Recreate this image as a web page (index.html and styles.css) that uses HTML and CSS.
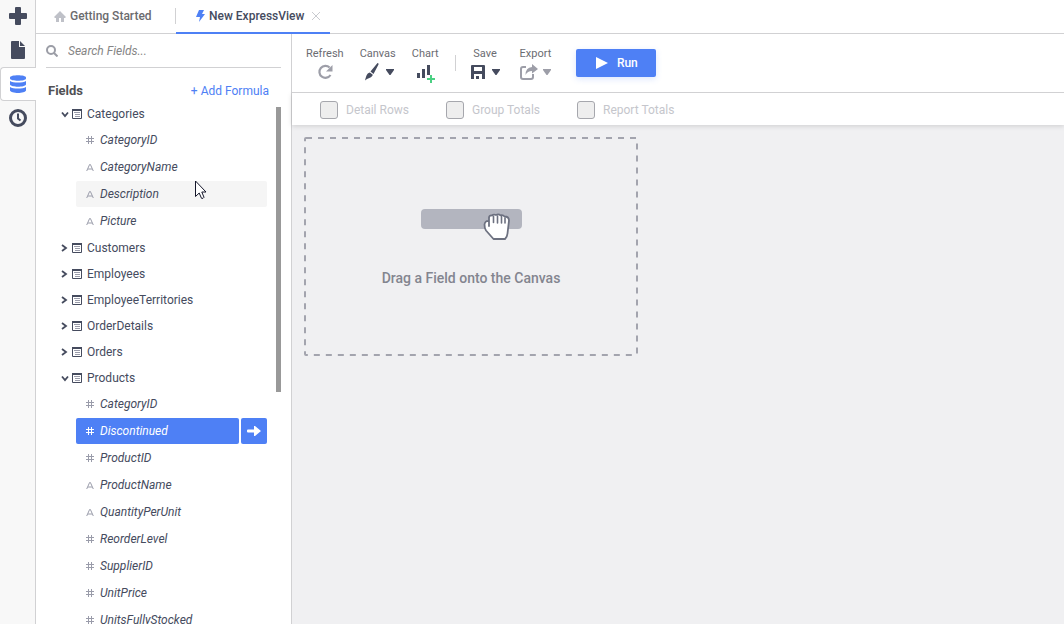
FILE: index.html
```html
<!DOCTYPE html>
<html lang="en">
<head>
<meta charset="utf-8">
<title>New ExpressView</title>
<link rel="stylesheet" href="styles.css">
</head>
<body>
<svg class="sprite" aria-hidden="true">
  <symbol id="down" viewBox="0 0 8 8"><path d="M1 2.500l3 3.500 3-3.500" fill="none" stroke="currentColor" stroke-width="1.800"/></symbol>
  <symbol id="right" viewBox="0 0 8 8"><path d="M1 1l4 3-4 3" fill="none" stroke="currentColor" stroke-width="1.800"/></symbol>
  <symbol id="table" viewBox="0 0 10 10"><path d="M.5 1v8.500h9V1" fill="none" stroke="currentColor"/><path d="M0 0h10v2H0z" fill="currentColor"/><path d="M2 3.500h6M3 5.500h5M3 7.500h5" stroke="#9a9caa"/></symbol>
  <symbol id="hash" viewBox="0 0 8 8"><path d="M2.500 0v8M5.500 0v8M0 2.500h8M0 5.500h8" stroke="currentColor"/></symbol>
  <symbol id="alpha" viewBox="0 0 8 8"><path d="M.7 8L3.600 1.500h.8L7.300 8M2 6h4" fill="none" stroke="currentColor"/></symbol>
  <symbol id="caret" viewBox="0 0 8 6"><path d="M0 0h8v1L4.500 6h-1L0 1z" fill="currentColor"/></symbol>
</svg>
<div class="app">
  <nav class="rail" aria-label="Main">
    <button class="rail-item" aria-label="New"><svg width="18" height="18" viewBox="0 0 18 18"><path d="M7 0h4q1 0 1 1v5h5q1 0 1 1v4q0 1-1 1h-5v5q0 1-1 1H7q-1 0-1-1v-5H1q-1 0-1-1V7q0-1 1-1h5V1q0-1 1-1z" fill="currentColor"/></svg></button>
    <button class="rail-item" aria-label="Reports"><svg width="14" height="18" viewBox="0 0 14 18"><path d="M1 0h7v6h6v11q0 1-1 1H1q-1 0-1-1V1q0-1 1-1zM9 0l5 5H9z" fill="currentColor"/></svg></button>
    <button class="rail-item current" aria-label="Data"><svg width="16" height="18" viewBox="0 0 16 18"><path d="M0 2.500C0-.5 16-.5 16 2.500v1c0 3-16 3-16 0zM0 6c3 2 13 2 16 0v3.500c-1 3-15 3-16 0zM0 12c3 2 13 2 16 0v3.500c-1 3.300-15 3.300-16 0z" fill="currentColor"/></svg></button>
    <button class="rail-item" aria-label="Schedule"><svg width="18" height="18" viewBox="0 0 18 18"><circle cx="9" cy="9" r="7.500" fill="none" stroke="currentColor" stroke-width="3"/><path d="M9 4.500v5l2.500 2" fill="none" stroke="currentColor" stroke-width="2"/></svg></button>
  </nav>
  <div class="work">
    <header class="tabs">
      <button class="tab home"><svg width="12" height="11" viewBox="0 0 12 11"><path d="M6 0l6 6-1 1h-1v4H7V7H5v4H2V7H1L0 6z" fill="#bfc1c8"/></svg>Getting Started</button>
      <div class="tab active"><svg width="9" height="12" viewBox="0 0 9 12"><path d="M3 0h5L6 4h3L3 12l1-5H0z" fill="#4e80f5"/></svg><span>New ExpressView</span><button class="close" aria-label="Close tab"><svg width="8" height="8" viewBox="0 0 8 8"><path d="M0 0l8 8M8 0L0 8" stroke="#c9cbd0"/></svg></button></div>
    </header>
    <div class="body">
      <aside class="panel">
        <label class="search"><svg width="12" height="12" viewBox="0 0 12 12"><circle cx="5" cy="5" r="4" fill="none" stroke="#9b9da6" stroke-width="2"/><path d="M8 8l3.500 3.500" stroke="#9b9da6" stroke-width="2"/></svg><input type="search" placeholder="Search Fields..." aria-label="Search fields"></label>
        <div class="panel-head"><h2>Fields</h2><a href="#">+ Add Formula</a></div>
        <div class="tree-area">
          <ul class="tree">
            <li><button class="group"><svg class="arrow"><use href="#down"/></svg><svg class="tbl"><use href="#table"/></svg>Categories</button>
              <ul class="fields">
                <li><button class="field"><svg><use href="#hash"/></svg>CategoryID</button></li>
                <li><button class="field"><svg><use href="#alpha"/></svg>CategoryName</button></li>
                <li><button class="field hovered"><svg><use href="#alpha"/></svg>Description</button></li>
                <li><button class="field"><svg><use href="#alpha"/></svg>Picture</button></li>
              </ul></li>
            <li><button class="group"><svg class="arrow"><use href="#right"/></svg><svg class="tbl"><use href="#table"/></svg>Customers</button></li>
            <li><button class="group"><svg class="arrow"><use href="#right"/></svg><svg class="tbl"><use href="#table"/></svg>Employees</button></li>
            <li><button class="group"><svg class="arrow"><use href="#right"/></svg><svg class="tbl"><use href="#table"/></svg>EmployeeTerritories</button></li>
            <li><button class="group"><svg class="arrow"><use href="#right"/></svg><svg class="tbl"><use href="#table"/></svg>OrderDetails</button></li>
            <li><button class="group"><svg class="arrow"><use href="#right"/></svg><svg class="tbl"><use href="#table"/></svg>Orders</button></li>
            <li><button class="group"><svg class="arrow"><use href="#down"/></svg><svg class="tbl"><use href="#table"/></svg>Products</button>
              <ul class="fields">
                <li><button class="field"><svg><use href="#hash"/></svg>CategoryID</button></li>
                <li><button class="field selected"><svg><use href="#hash"/></svg>Discontinued</button><button class="add" aria-label="Add Discontinued"><svg width="14" height="10" viewBox="0 0 14 10"><path d="M1 3.500h6V0h1l6 5-6 5H7V6.500H1q-1 0-1-1v-1q0-1 1-1z" fill="#fff"/></svg></button></li>
                <li><button class="field"><svg><use href="#hash"/></svg>ProductID</button></li>
                <li><button class="field"><svg><use href="#alpha"/></svg>ProductName</button></li>
                <li><button class="field"><svg><use href="#alpha"/></svg>QuantityPerUnit</button></li>
                <li><button class="field"><svg><use href="#hash"/></svg>ReorderLevel</button></li>
                <li><button class="field"><svg><use href="#hash"/></svg>SupplierID</button></li>
                <li><button class="field"><svg><use href="#hash"/></svg>UnitPrice</button></li>
                <li><button class="field"><svg><use href="#hash"/></svg>UnitsFullyStocked</button></li>
              </ul></li>
          </ul>
          <div class="scroll-track"><div class="scroll-thumb"></div></div>
          <svg class="pointer" width="13" height="20" viewBox="0 0 13 20"><path d="M1.500 1v15.500l3.700-3.500 2.300 5.300q1.800.5 2.500-1L7.800 12H12z" fill="#fff" stroke="#14162a"/></svg>
        </div>
      </aside>
      <main class="main">
        <div class="toolbar">
          <button class="tool muted"><span>Refresh</span><span class="icons"><svg width="16" height="16" viewBox="0 0 16 16"><path d="M12.600 3.500A6 6 0 1 0 13.500 11" fill="none" stroke="currentColor" stroke-width="2.200"/><path d="M15.500 1v6.500H9z" fill="currentColor"/></svg></span></button>
          <button class="tool brush"><span>Canvas</span><span class="icons"><svg width="14" height="18" viewBox="0 0 14 18"><path d="M12.500 0q1.500 0 1 1.500L8.500 11 5.500 8.500zM4.800 9.400l3 2.400C7 15 3.500 14.500 0 17.500c1-3.500 1.500-7.500 4.800-8.100z" fill="currentColor"/></svg><svg class="caret"><use href="#caret"/></svg></span></button>
          <button class="tool"><span>Chart</span><span class="icons"><svg width="20" height="22" viewBox="0 0 20 22"><path d="M2 12h3v5H2zM7 8h3v9H7zM12 4h3v10h-3z" fill="currentColor"/><path d="M16 14v8M12 18h8" stroke="#4bd083" stroke-width="2"/></svg></span></button>
          <span class="divider"></span>
          <button class="tool save"><span>Save</span><span class="icons"><svg width="14" height="14" viewBox="0 0 14 14"><path fill-rule="evenodd" d="M1 0h12q1 0 1 1v13H0V1q0-1 1-1zM3 2v4h8V2zM3 9v5h8V9z" fill="currentColor"/><path d="M5 11h3v3H5z" fill="currentColor"/></svg><svg class="caret"><use href="#caret"/></svg></span></button>
          <button class="tool muted export"><span>Export</span><span class="icons"><svg width="18" height="16" viewBox="0 0 18 16"><path d="M6 3H3Q1 3 1 5v8q0 2 2 2h8q2 0 2-2v-3" fill="none" stroke="currentColor" stroke-width="2"/><path d="M12 0l6 5-6 4.500V7Q7.500 7 5.500 11 5.500 3.500 12 3z" fill="currentColor"/></svg><svg class="caret"><use href="#caret"/></svg></span></button>
          <button class="run"><svg width="13" height="14" viewBox="0 0 13 14"><path d="M1 1l12 6-12 6z" fill="#fff"/></svg>Run</button>
        </div>
        <div class="options">
          <label><input type="checkbox" disabled>Detail Rows</label>
          <label><input type="checkbox" disabled>Group Totals</label>
          <label><input type="checkbox" disabled>Report Totals</label>
        </div>
        <section class="canvas">
          <div class="drop">
            <svg class="dashes" aria-hidden="true"><rect x="1" y="1" rx="1"/></svg>
            <svg width="101" height="32" viewBox="0 0 101 32"><rect width="101" height="20" rx="4" fill="#b3b5bf"/><path d="M68 17V8.500Q68.500 6 71 6.500 72.500 5 75 6q2.500-1.500 4.500.3 2.500-.8 4 1.200 4.500 0 4.500 4l-1.500 13q-.3 3.500-2.500 5.500H72.500L65 21.500q-1.500-2-1.500-6 .5-4 4.500-3.500" fill="#fff" stroke="#6d7180" stroke-width="1.800" stroke-linejoin="round" stroke-linecap="round"/><path d="M72.500 7.500v6M76.500 7v7M80.500 7.500V14M84 9v5" fill="none" stroke="#6d7180" stroke-width="1.600" stroke-linecap="round"/></svg>
            <p>Drag a Field onto the Canvas</p>
          </div>
        </section>
      </main>
    </div>
  </div>
</div>
</body>
</html>
```
FILE: styles.css
```css
* { box-sizing: border-box; }
body { margin: 0; font: 12px/16px Roboto, "Liberation Sans", sans-serif; color: #454b5e; background: #fff; }
button { font: inherit; color: inherit; background: none; border: 0; padding: 0; cursor: pointer; }
svg { display: block; flex: none; }
ul { list-style: none; margin: 0; padding: 0; }
.sprite { position: absolute; width: 0; height: 0; }
.app { display: flex; height: 100vh; overflow: hidden; }

.rail { width: 36px; flex: none; background: #f8f8f8; border-right: 1px solid #d1d1d3; }
.rail-item { display: flex; align-items: center; justify-content: center; width: 36px; height: 34px; }
.rail-item:first-child { height: 33px; padding-bottom: 1px; }
.rail-item:nth-child(2) { height: 34px; }
.rail-item.current { background: #fff; color: #4e80f5; border: 1px solid #d1d1d3; border-right: 0; border-radius: 4px 0 0 4px; padding-right: 1px; }

.work { flex: 1; min-width: 0; display: flex; flex-direction: column; }
.tabs { display: flex; height: 34px; flex: none; border-bottom: 1px solid #d1d1d3; font-weight: 500; }
.tab { display: flex; align-items: center; height: 34px; padding-bottom: 2px; }
.home { width: 140px; padding-left: 18px; gap: 4px; color: #6b6b6e; background: linear-gradient(#d1d1d3, #d1d1d3) right 8px / 1px 16px no-repeat; }
.active { border-bottom: 2px solid #4e80f5; padding: 0 10px 0 20px; gap: 4px; }
.close { padding-left: 4px; }

.body { flex: 1; min-height: 0; display: flex; }
.panel { width: 256px; flex: none; display: flex; flex-direction: column; border-right: 1px solid #d1d1d3; }
.search { display: flex; align-items: center; gap: 10px; height: 34px; flex: none; margin: 0 10px; border-bottom: 1px solid #d1d1d3; }
.search input { flex: 1; min-width: 0; border: 0; outline: 0; padding: 0; background: none; font: italic 12px/16px Roboto, sans-serif; color: inherit; }
.search input::placeholder { color: #858585; }
.panel-head { display: flex; justify-content: space-between; padding: 15px 22px 2px 12px; }
.panel-head h2 { margin: 0; font-size: 13px; line-height: 16px; font-weight: 700; color: #505054; }
.panel-head a { color: #4e80f5; text-decoration: none; }
.tree-area { position: relative; flex: 1; min-height: 0; display: flex; justify-content: space-between; overflow: hidden; }
.tree { width: 231px; }
.group { display: flex; align-items: center; height: 26px; padding-left: 25px; }
.arrow { width: 8px; height: 8px; margin-right: 3px; }
.tbl { width: 10px; height: 10px; margin-right: 5px; }
.fields { padding-left: 40px; }
.fields li { display: flex; gap: 2px; padding-bottom: 1px; }
.field { flex: 1; display: flex; align-items: center; gap: 6px; height: 26px; padding-left: 10px; border-radius: 2px; font-style: italic; }
.field svg { width: 8px; height: 8px; color: #9a9caa; }
.hovered { background: #f5f5f5; }
.selected { background: #4e80f5; color: #fff; }
.selected svg { color: #fff; }
.add { display: flex; align-items: center; justify-content: center; width: 26px; height: 26px; border-radius: 2px; background: #4e80f5; }
.scroll-track { width: 5px; margin: 6px 10px 0 0; }
.scroll-thumb { width: 5px; height: 285px; background: #999; }
.pointer { position: absolute; left: 158px; top: 79px; }

.main { flex: 1; min-width: 0; display: flex; flex-direction: column; background: #f0f0f2; }
.toolbar { position: relative; z-index: 1; display: flex; align-items: flex-start; height: 59px; flex: none; padding: 12px 14px 0; gap: 16px; background: #fff; border-bottom: 1px solid #d1d1d3; }
.tool { display: flex; flex-direction: column; align-items: center; font-size: 11px; color: #6b6c72; }
.icons { display: flex; align-items: center; justify-content: center; gap: 7px; height: 20px; color: #454b5e; }
.muted .icons { color: #9d9ea8; }
.brush .icons { padding-left: 4px; }
.caret { width: 8px; height: 6px; }
.divider { width: 1px; height: 16px; margin-top: 9px; background: #d1d1d3; }
.save { margin-left: -1px; }
.export { margin-left: 4px; }
.export .icons { gap: 5px; }
.run { display: flex; align-items: center; justify-content: center; gap: 9px; width: 80px; height: 28px; margin: 3px 0 0 9px; border-radius: 2px; background: #4e80f5; color: #fff; font-weight: 500; box-shadow: 0 2px 6px rgba(78, 128, 245, .2); }
.options { display: flex; align-items: center; gap: 37px; height: 32px; flex: none; padding: 2px 0 0 28px; background: #fff; box-shadow: 0 1px 5px rgba(0, 0, 0, .15); }
.options label { display: flex; align-items: center; gap: 8px; color: #c5c6cc; }
.options input { appearance: none; width: 18px; height: 18px; margin: 0; border: 1px solid #a6a7ad; border-radius: 3px; background: #eee; }
.canvas { flex: 1; padding: 12px; }
.drop { position: relative; display: flex; flex-direction: column; align-items: center; width: 334px; padding: 72px 0 70px; }
.dashes { position: absolute; inset: 0; width: 100%; height: 100%; }
.dashes rect { width: calc(100% - 2px); height: calc(100% - 2px); fill: none; stroke: #a3a4ae; stroke-width: 2; stroke-dasharray: 6 6; }
.drop p { margin: 29px 0 0; font-size: 14px; line-height: 16px; font-weight: 500; color: #83858f; }
```
